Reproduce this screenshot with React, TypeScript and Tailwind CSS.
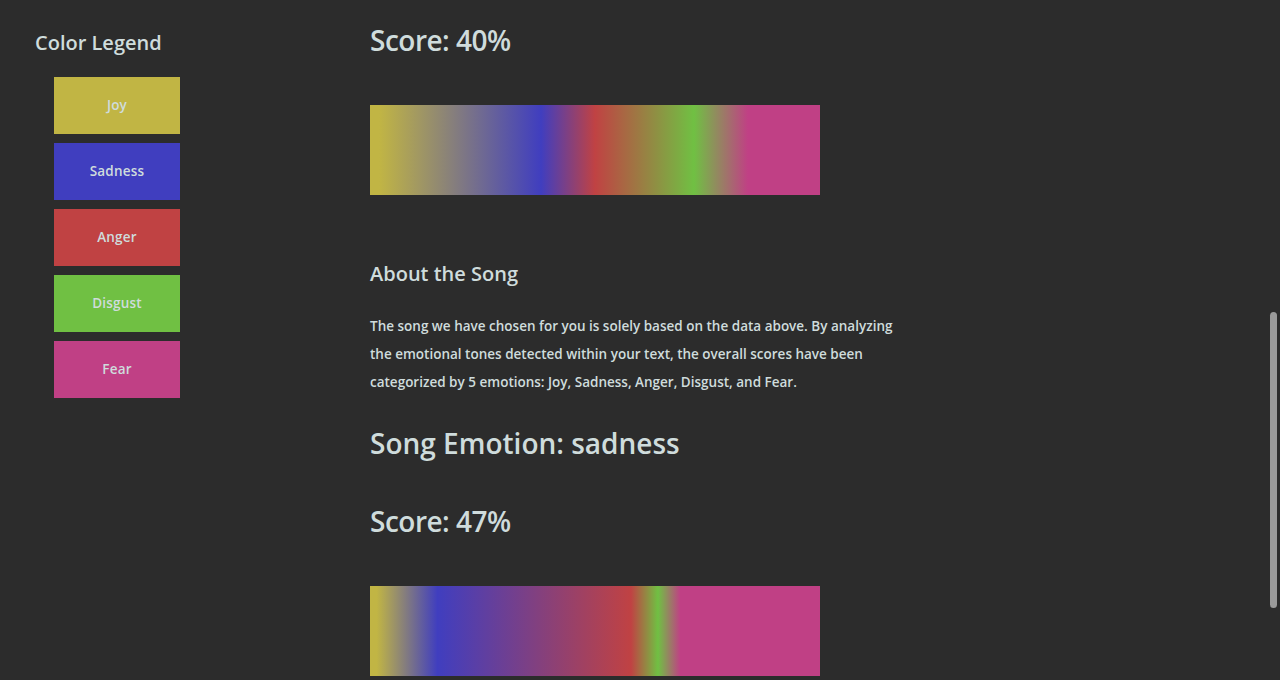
const emotions = [
  { name: 'Joy', color: 'bg-[#c1b544]' },
  { name: 'Sadness', color: 'bg-[#403ebf]' },
  { name: 'Anger', color: 'bg-[#c04243]' },
  { name: 'Disgust', color: 'bg-[#70c043]' },
  { name: 'Fear', color: 'bg-[#c04085]' },
]

export default function App() {
  return (
    <div className="relative h-[680px] overflow-hidden bg-[#2c2c2c] text-[#cfdcdc] font-['Open_Sans',sans-serif]">
      <div className="flex">
        {/* Sidebar legend */}
        <aside className="w-[370px] shrink-0 pl-[35px] pt-[30px]">
          <h2 className="text-[20px] font-semibold leading-[26px]">Color Legend</h2>
          <div className="mt-[21px] ml-[19px] flex flex-col gap-[9px]">
            {emotions.map((e) => (
              <div
                key={e.name}
                className={`${e.color} w-[126px] h-[57px] flex items-center justify-center text-[13.5px] font-semibold tracking-[0.2px]`}
              >
                {e.name}
              </div>
            ))}
          </div>
        </aside>

        {/* Main results */}
        <main className="flex-1 pt-[22px]">
          <h1 className="text-[28px] font-semibold leading-[36px] tracking-[-0.5px]">Score: 40%</h1>
          <div className="mt-[47px] w-[450px] h-[90px] bg-[linear-gradient(to_right,#c1b544_2%,#403ebf_38%,#c04243_50%,#70c043_72%,#c04085_84%)]" />

          <h2 className="mt-[66px] text-[20px] font-semibold leading-[26px]">About the Song</h2>
          <p className="mt-[25px] text-[13.5px] font-semibold leading-[28px]">
            The song we have chosen for you is solely based on the data above. By analyzing
            <br />
            the emotional tones detected within your text, the overall scores have been
            <br />
            categorized by 5 emotions: Joy, Sadness, Anger, Disgust, and Fear.
          </p>

          <h1 className="mt-[29px] text-[28px] font-semibold leading-[36px]">Song Emotion: sadness</h1>
          <h1 className="mt-[42px] text-[28px] font-semibold leading-[36px] tracking-[-0.5px]">Score: 47%</h1>
          <div className="mt-[47px] w-[450px] h-[90px] bg-[linear-gradient(to_right,#c1b544_1.5%,#403ebf_15%,#c04243_58%,#70c043_64%,#c04085_69%)]" />
        </main>
      </div>

      {/* overlay scrollbar thumb */}
      <div className="absolute right-[3px] top-[312px] w-[7px] h-[296px] rounded-full bg-[#9a9a9a]" />
    </div>
  )
}
